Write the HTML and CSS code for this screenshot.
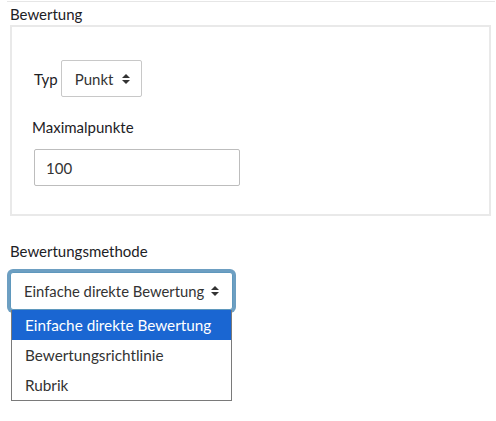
FILE: index.html
```html
<!DOCTYPE html>
<html lang="de">
<head>
<meta charset="utf-8">
<title>Bewertung</title>
<link rel="stylesheet" href="styles.css">
</head>
<body>
<div class="topline"></div>
<section class="group">
  <div class="legend">Bewertung</div>
  <div class="box">
    <div class="row-typ">
      <span class="lbl">Typ</span>
      <div class="sel sel-small">
        <span>Punkt</span>
        <svg class="caret" width="8" height="12" viewBox="0 0 8 12"><path d="M0 5 L4 1 L8 5 Z M0 7 L4 11 L8 7 Z" fill="#333"/></svg>
      </div>
    </div>
    <div class="lbl lbl-max">Maximalpunkte</div>
    <div class="input">100</div>
  </div>
</section>
<section class="method">
  <div class="lbl lbl-method">Bewertungsmethode</div>
  <div class="focus-wrap">
    <div class="sel sel-wide">
      <span>Einfache direkte Bewertung</span>
      <svg class="caret" width="8" height="12" viewBox="0 0 8 12"><path d="M0 5 L4 1 L8 5 Z M0 7 L4 11 L8 7 Z" fill="#333"/></svg>
    </div>
    <ul class="dropdown">
      <li class="opt active">Einfache direkte Bewertung</li>
      <li class="opt">Bewertungsrichtlinie</li>
      <li class="opt">Rubrik</li>
    </ul>
  </div>
</section>
</body>
</html>
```

FILE: styles.css
```css
* { box-sizing: border-box; }
html, body { margin: 0; padding: 0; background: #fff; }
body {
  font-family: Lato, "Open Sans", sans-serif;
  font-size: 15px;
  line-height: 22px;
  color: #1d2125;
  width: 496px;
  height: 421px;
  overflow: hidden;
}
.topline {
  height: 1px;
  margin: 1px 1px 0 7px;
  background: #e6e6e6;
}
.group { padding-left: 10px; padding-right: 5px; }
.legend { height: 23px; padding-top: 1px; }
.box {
  width: 481px;
  height: 191px;
  border: 2px solid #e9e9e9;
  padding: 33px 0 0 22px;
}
.row-typ { display: flex; align-items: center; gap: 3px; }
.sel {
  display: flex;
  align-items: center;
  justify-content: space-between;
  background: #fff;
  border: 1px solid #c8c8c8;
  border-radius: 2px;
  color: #333;
}
.sel-small {
  width: 81px;
  height: 37px;
  padding: 0 11px 0 13px;
}
.lbl-max { margin: 19px 0 0 -2px; }
.input {
  margin-top: 11px;
  width: 206px;
  height: 37px;
  border: 1px solid #bdbdbd;
  border-radius: 2px;
  padding: 7px 0 0 11px;
  color: #333;
}
.method { padding: 24px 0 0 10px; }
.lbl-method { height: 22px; }
.focus-wrap {
  position: relative;
  margin-top: 10px;
  width: 223px;
}
.sel-wide {
  width: 223px;
  height: 38px;
  padding: 0 13px 0 13px;
  border-color: #5f98bd;
  border-radius: 3px;
  box-shadow: 0 0 0 3px #6d9fc2;
  font-size: 14.8px;
}
.dropdown {
  position: absolute;
  left: 1px;
  top: 38px;
  width: 221px;
  margin: 0;
  padding: 0;
  list-style: none;
  background: #fff;
  border: 1px solid #7a7a7a;
  border-top: none;
  color: #333;
  font-size: 15.3px;
}
.opt {
  height: 30px;
  line-height: 30px;
  padding-left: 13px;
}
.opt.active { background: #1a66d2; color: #fff; }
```
